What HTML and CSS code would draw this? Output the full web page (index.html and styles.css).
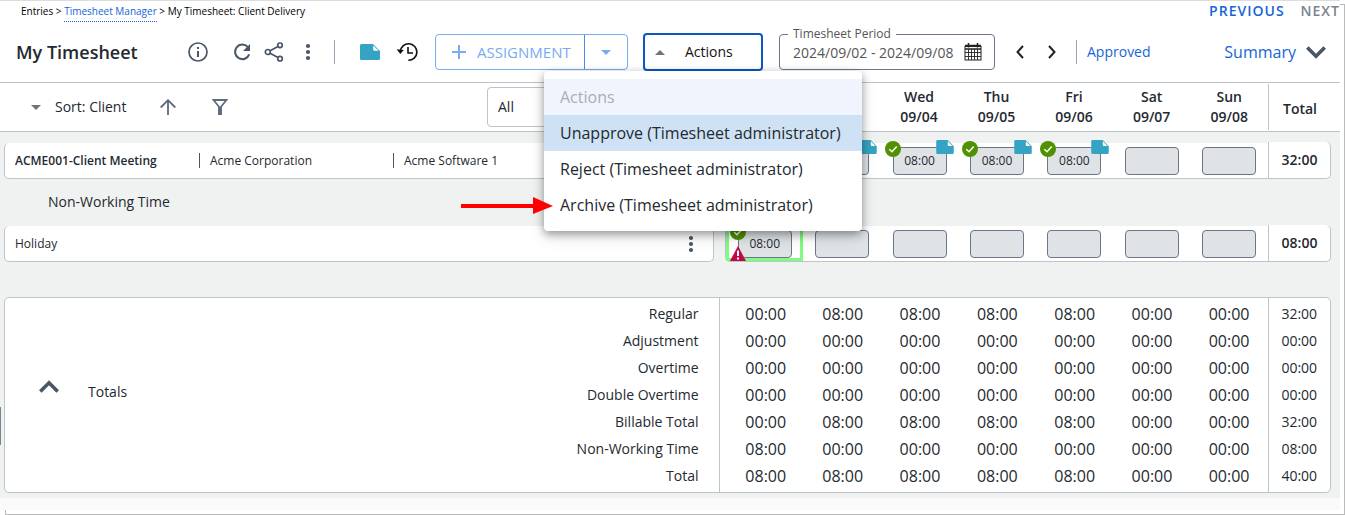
FILE: index.html
```
<!DOCTYPE html>
<html lang="en">
<head>
<meta charset="utf-8">
<title>My Timesheet: Client Delivery</title>
<link rel="stylesheet" href="styles.css">
</head>
<body>
<svg class="defs" aria-hidden="true">
  <symbol id="note" viewBox="0 0 20 16"><path d="M1.500 0H13L20 7V14.500A1.500 1.500 0 0 1 18.500 16H1.500A1.500 1.500 0 0 1 0 14.500V1.500A1.500 1.500 0 0 1 1.500 0Z" fill="#35a3c3"/><path d="M13.200 1.400 18.600 6.800H14.200a1 1 0 0 1-1-1Z" fill="#fff"/></symbol>
  <symbol id="check" viewBox="0 0 16 16"><circle cx="8" cy="8" r="8" fill="#4f9100"/><path d="M4.300 8.200 7 10.700 11.700 5.500" fill="none" stroke="#fff" stroke-width="1.500"/></symbol>
  <symbol id="dots" viewBox="0 0 6 18"><g fill="#4a5568"><circle cx="3" cy="3" r="2.100"/><circle cx="3" cy="9" r="2.100"/><circle cx="3" cy="15" r="2.100"/></g></symbol>
</svg>
<div class="frame">
<div class="app">
  <nav class="crumbs">
    <span class="trail">Entries &gt; <a href="#">Timesheet Manager</a> &gt; My Timesheet: Client Delivery</span>
    <span class="pager"><a href="#">PREVIOUS</a><span class="off">NEXT</span></span>
  </nav>

  <header class="toolbar">
    <h1>My Timesheet</h1>
    <button class="icon" aria-label="Information"><svg width="20" height="20" viewBox="0 0 20 20"><circle cx="10" cy="10" r="9" fill="none" stroke="#4a5568" stroke-width="1.700"/><path d="M9 5h2v2H9zM9 9h2v6H9z" fill="#4a5568"/></svg></button>
    <button class="icon refresh" aria-label="Refresh"><svg width="20" height="20" viewBox="0 0 20 20"><path d="M15.700 4.900A7.300 7.300 0 1 0 17.200 12.400" fill="none" stroke="#4a5568" stroke-width="2"/><path d="M18 2V9H11Z" fill="#4a5568"/></svg></button>
    <button class="icon share" aria-label="Share"><svg width="20" height="20" viewBox="0 0 20 20" fill="none" stroke="#4a5568" stroke-width="1.700"><circle cx="3.800" cy="10" r="2.500"/><circle cx="16" cy="3.300" r="2.300"/><circle cx="16" cy="16.700" r="2.300"/><path d="M6 8.800 14 4.400M6 11.200l8 4.400"/></svg></button>
    <button class="icon more" aria-label="More"><svg width="6" height="18"><use href="#dots"/></svg></button>
    <span class="rule"></span>
    <button class="icon notes" aria-label="Notes"><svg width="20" height="16"><use href="#note"/></svg></button>
    <button class="icon history" aria-label="History"><svg width="22" height="20" viewBox="0 0 22 20" fill="none" stroke="#111" stroke-width="1.600"><path d="M4.300 9.500A8.300 8.300 0 1 1 12.300 18.300"/><path d="M12 5v6h5"/><path d="M.700 7.200 7.800 8 4.300 12Z" fill="#111" stroke="none"/></svg></button>
    <div class="split">
      <button class="add"><svg width="14" height="14" viewBox="0 0 14 14"><path d="M7 0v14M0 7h14" stroke="#7aaaf0" stroke-width="2"/></svg>ASSIGNMENT</button>
      <button class="drop" aria-label="Assignment options"><svg width="10" height="5" viewBox="0 0 10 5"><path d="M0 0H10L5 5Z" fill="#7aaaf0"/></svg></button>
    </div>
    <div class="actions">
      <button class="toggle" aria-expanded="true"><svg width="10" height="5" viewBox="0 0 10 5"><path d="M0 5H10L5 0Z" fill="#737373"/></svg>Actions</button>
      <div class="menu" role="menu">
        <div class="menu-title">Actions</div>
        <button role="menuitem" class="current">Unapprove (Timesheet administrator)</button>
        <button role="menuitem">Reject (Timesheet administrator)</button>
        <button role="menuitem">Archive (Timesheet administrator)</button>
        <svg class="pointer" width="92" height="18" viewBox="0 0 92 18"><path d="M0 7H72V0L92 9 72 17V11H0Z" fill="#f00"/></svg>
      </div>
    </div>
    <fieldset class="period">
      <legend><label for="period">Timesheet Period</label></legend>
      <input id="period" type="text" value="2024/09/02 - 2024/09/08">
      <button class="icon" aria-label="Open calendar"><svg width="18" height="18" viewBox="0 0 18 18"><rect x="1" y="3.500" width="16" height="13.500" fill="#fff" stroke="#222"/><path d="M1 2.500H17M1 6H17" stroke="#222" stroke-width="1.500"/><path d="M4.500 0V4.500M13.500 0V4.500" stroke="#222" stroke-width="1.500"/><path d="M1 9.500H17M1 13.500H17M4.500 6V17M7.500 6V17M10.500 6V17M13.500 6V17" stroke="#222" stroke-width=".9"/></svg></button>
    </fieldset>
    <button class="icon prev" aria-label="Previous period"><svg width="8" height="14" viewBox="0 0 8 14"><path d="M7 1 1.500 7 7 13" fill="none" stroke="#222" stroke-width="2"/></svg></button>
    <button class="icon next" aria-label="Next period"><svg width="8" height="14" viewBox="0 0 8 14"><path d="M1 1 6.500 7 1 13" fill="none" stroke="#222" stroke-width="2"/></svg></button>
    <span class="rule status-rule"></span>
    <a class="status" href="#">Approved</a>
    <button class="summary">Summary<svg width="20" height="13" viewBox="0 0 20 13"><path d="M1.300 1.500 10 10.200 18.700 1.500" fill="none" stroke="#4a5568" stroke-width="3.600"/></svg></button>
  </header>

  <div class="heads">
    <div class="sort">
      <button class="sort-by"><svg width="10" height="5" viewBox="0 0 10 5"><path d="M0 0H10L5 5Z" fill="#737373"/></svg>Sort: Client</button>
      <button class="icon" aria-label="Sort direction"><svg width="16" height="16" viewBox="0 0 16 16"><path d="M8 16V1.500M.700 8.500 8 1.200 15.300 8.500" fill="none" stroke="#5d6b7e" stroke-width="1.800"/></svg></button>
      <button class="icon filter" aria-label="Filter"><svg width="16" height="16" viewBox="0 0 16 16"><path d="M1.500 1H14.500L9 7.800V15H7V7.800Z" fill="none" stroke="#5d6b7e" stroke-width="1.800"/><path d="M6.500 8h3V15.500h-3Z" fill="#5d6b7e"/></svg></button>
      <select class="scope" aria-label="Show"><option>All</option></select>
    </div>
    <div class="days day-names">
      <span></span><span></span><span>Wed<br>09/04</span><span>Thu<br>09/05</span><span>Fri<br>09/06</span><span>Sat<br>09/07</span><span>Sun<br>09/08</span>
    </div>
    <div class="sum-head">Total</div>
  </div>

  <main class="sheet">
    <div class="entry">
      <div class="task"><strong>ACME001-Client Meeting</strong><span class="field">Acme Corporation</span><span class="field">Acme Software 1</span></div>
      <div class="days cells">
        <div class="cell"><input aria-label="Mon 09/02"></div>
        <div class="cell"><input aria-label="Tue 09/03"><svg class="ok"><use href="#check"/></svg><svg class="tag"><use href="#note"/></svg></div>
        <div class="cell"><input aria-label="Wed 09/04" value="08:00"><svg class="ok"><use href="#check"/></svg><svg class="tag"><use href="#note"/></svg></div>
        <div class="cell"><input aria-label="Thu 09/05" value="08:00"><svg class="ok"><use href="#check"/></svg><svg class="tag"><use href="#note"/></svg></div>
        <div class="cell"><input aria-label="Fri 09/06" value="08:00"><svg class="ok"><use href="#check"/></svg><svg class="tag"><use href="#note"/></svg></div>
        <div class="cell"><input aria-label="Sat 09/07"></div>
        <div class="cell"><input aria-label="Sun 09/08"></div>
      </div>
      <div class="sum">32:00</div>
    </div>
    <h2>Non-Working Time</h2>
    <div class="entry">
      <div class="task"><span>Holiday</span><button class="icon row-more" aria-label="More"><svg width="6" height="18"><use href="#dots"/></svg></button></div>
      <div class="days cells">
        <div class="cell marked"><input aria-label="Holiday Mon 09/02" value="08:00"><svg class="ok"><use href="#check"/></svg><svg class="warn" viewBox="0 0 16 15"><path d="M8 0 16 15H0Z" fill="#c00a45"/><path d="M8 4.500V10M8 11.500V13.500" stroke="#fff" stroke-width="2"/></svg></div>
        <div class="cell"><input aria-label="Holiday Tue 09/03"></div>
        <div class="cell"><input aria-label="Holiday Wed 09/04"></div>
        <div class="cell"><input aria-label="Holiday Thu 09/05"></div>
        <div class="cell"><input aria-label="Holiday Fri 09/06"></div>
        <div class="cell"><input aria-label="Holiday Sat 09/07"></div>
        <div class="cell"><input aria-label="Holiday Sun 09/08"></div>
      </div>
      <div class="sum">08:00</div>
    </div>

    <section class="totals">
      <button class="collapse"><svg width="20" height="13" viewBox="0 0 20 13"><path d="M1.300 11.500 10 2.800 18.700 11.500" fill="none" stroke="#4a5568" stroke-width="3.600"/></svg><span>Totals</span></button>
      <table>
        <tr><th>Regular</th><td>00:00</td><td>08:00</td><td>08:00</td><td>08:00</td><td>08:00</td><td>00:00</td><td>00:00</td><td>32:00</td></tr>
        <tr><th>Adjustment</th><td>00:00</td><td>00:00</td><td>00:00</td><td>00:00</td><td>00:00</td><td>00:00</td><td>00:00</td><td>00:00</td></tr>
        <tr><th>Overtime</th><td>00:00</td><td>00:00</td><td>00:00</td><td>00:00</td><td>00:00</td><td>00:00</td><td>00:00</td><td>00:00</td></tr>
        <tr><th>Double Overtime</th><td>00:00</td><td>00:00</td><td>00:00</td><td>00:00</td><td>00:00</td><td>00:00</td><td>00:00</td><td>00:00</td></tr>
        <tr><th>Billable Total</th><td>00:00</td><td>08:00</td><td>08:00</td><td>08:00</td><td>08:00</td><td>00:00</td><td>00:00</td><td>32:00</td></tr>
        <tr><th>Non-Working Time</th><td>08:00</td><td>00:00</td><td>00:00</td><td>00:00</td><td>00:00</td><td>00:00</td><td>00:00</td><td>08:00</td></tr>
        <tr><th>Total</th><td>08:00</td><td>08:00</td><td>08:00</td><td>08:00</td><td>08:00</td><td>00:00</td><td>00:00</td><td>40:00</td></tr>
      </table>
    </section>
  </main>
  <div class="foot"></div>
  <span class="handle"></span>
</div>
</div>
</body>
</html>
```
FILE: styles.css
```
* { box-sizing: border-box; }
body { margin: 0; background: #fff; color: #24292f; font: 14px/20px "Open Sans", "Noto Sans", sans-serif; }
button, input, select { font: inherit; color: inherit; margin: 0; padding: 0; border: 0; background: none; }
button { display: flex; align-items: center; cursor: pointer; }
a { color: #1565d8; text-decoration: none; }
svg { display: block; flex: none; }
.defs { position: absolute; width: 0; height: 0; }

.frame { position: relative; padding: 0 5px 5px 0; }
.frame::before { content: ""; position: absolute; inset: 4px 0 0 5px; border: 1px solid #bbb; }
.app { position: relative; background: #fff; border-top: 1px solid #ddd; }

.crumbs { display: flex; justify-content: space-between; height: 21px; padding-left: 21px; font-size: 10px; color: #000; }
.trail a { border-bottom: 1px dotted #1565d8; padding-bottom: 3px; }
.pager { display: flex; gap: 16px; font-size: 14px; font-weight: 600; letter-spacing: 1px; }
.pager .off { color: #7b8390; }

.toolbar { display: flex; align-items: center; height: 60px; padding: 0 14px 0 16px; }
h1 { flex: 0 0 172px; margin: 0; font-size: 18px; line-height: 24px; font-weight: 600; }
.icon { flex: none; justify-content: center; }
.refresh { margin-left: 24px; }
.share { margin-left: 12px; }
.more { margin-left: 21px; }
.rule { flex: none; width: 1px; height: 24px; margin-left: 23px; background: #9aa5b1; }
.notes { margin-left: 25px; }
.history { margin-left: 16px; }
.split { display: flex; flex: none; height: 36px; margin-left: 17px; border: 1px solid #7aaaf0; border-radius: 4px; color: #7aaaf0; font-size: 15px; }
.add { gap: 11px; width: 148px; padding-left: 16px; }
.drop { justify-content: center; width: 43px; border-left: 1px solid #4a8ce8; }
.actions { position: relative; z-index: 5; flex: none; margin-left: 15px; }
.toggle { gap: 20px; width: 120px; height: 38px; padding-left: 10px; border: 2px solid #0b57c4; border-radius: 4px; background: #fff; color: #111; }
.menu { position: absolute; top: 38px; right: -99px; min-width: 318px; padding: 8px 0; border-radius: 4px; background: #fff; box-shadow: 0 3px 8px rgba(0,0,0,.35), 0 6px 16px rgba(0,0,0,.12); font-size: 16px; white-space: nowrap; }
.menu-title { height: 36px; padding: 0 16px; line-height: 36px; color: #a9adb3; background: #f0f5fd; }
.menu button { width: 100%; height: 36px; padding: 0 16px; }
.menu .current { background: #cfe2f5; }
.pointer { position: absolute; left: -83px; bottom: 16px; }
.period { display: flex; flex: none; align-items: center; position: relative; width: 216px; min-width: 0; height: 36px; margin: 0 0 0 16px; padding: 0 12px 0 13px; border: 1px solid #6b7688; border-radius: 4px; color: #555; }
.period legend { position: absolute; top: -9px; left: 8px; padding: 0 5px; background: #fff; font-size: 12px; line-height: 16px; }
.period input { flex: 1; width: 160px; min-width: 0; height: 34px; }
.prev { margin-left: 21px; }
.next { margin-left: 24px; }
.status-rule { margin-left: 20px; }
.status { margin-left: 10px; }
.summary { gap: 10px; margin-left: auto; color: #1565d8; font-size: 16px; }

.heads { display: flex; height: 50px; padding-right: 9px; border: solid #bcc3ca; border-width: 1px 0; }
.sort { display: flex; flex: 1; align-items: center; padding-left: 31px; }
.sort-by { gap: 14px; width: 129px; }
.filter { margin-left: 36px; }
.scope { flex: 1; height: 40px; margin: 0 11px 0 259px; padding: 0 10px; border: 1px solid #bcc3ca; border-radius: 4px; appearance: none; }
.days { display: grid; flex: 0 0 543px; grid-template-columns: repeat(7, 1fr); }
.day-names { padding-top: 4px; text-align: center; font-weight: 600; }
.sum-head { display: flex; flex: 0 0 63px; align-items: center; justify-content: center; margin: 1px 0; padding-top: 4px; border-left: 1px solid #bcc3ca; font-weight: 600; }

.sheet { padding: 10px 9px 5px 4px; background: #f0f2f2; }
.entry { display: flex; height: 37px; font-size: 12px; }
.task { display: flex; flex: 1; align-items: center; margin: 1px 11px 0 0; padding-left: 10px; border: solid #bcc3ca; border-width: 0 1px 1px; border-radius: 5px; background: #fff; }
.task strong { flex: 0 0 184px; font-weight: 600; }
.field { flex: 0 0 194px; padding-left: 10px; border-left: 1px solid #4a5568; line-height: 15px; }
.row-more { margin: 0 19px 0 auto; }
.cells { margin-top: 1px; border: solid #bcc3ca; border-width: 0 0 1px 1px; border-radius: 5px 0 0 5px; background: #fff; }
.cell { position: relative; display: flex; align-items: center; justify-content: center; }
.cell input { width: 54px; height: 28px; border: 1px solid #6b7688; border-radius: 4px; background: #dfe3e6; text-align: center; }
.marked { box-shadow: inset 0 0 0 3px #80fb80; }
.ok, .tag, .warn { position: absolute; }
.ok { top: -2px; left: 4px; width: 16px; height: 16px; }
.tag { top: -3px; right: 4px; width: 18px; height: 14px; }
.warn { bottom: 0; left: 4px; width: 16px; height: 15px; }
.sum { display: flex; flex: 0 0 63px; align-items: center; justify-content: center; border: solid #bcc3ca; border-width: 0 1px 1px; border-radius: 0 5px 5px 0; background: #fff; font-size: 14px; font-weight: 600; }
h2 { margin: 0; padding: 13px 44px; font-size: 14px; line-height: 20px; font-weight: 400; }

.totals { display: flex; margin-top: 35px; border: 1px solid #bcc3ca; border-radius: 5px; background: #fff; }
.collapse { flex: 1; align-self: stretch; gap: 29px; padding: 0 34px 6px; }
.collapse svg { margin-bottom: 12px; }
.totals table { border-collapse: collapse; table-layout: fixed; width: 760px; border-spacing: 0; }
.totals th, .totals td { height: 27px; padding: 0; text-align: center; font-size: 16px; }
.totals th { width: 149px; padding-right: 20px; text-align: right; font-size: 14px; font-weight: 400; border-right: 1px solid #bcc3ca; }
.totals td:nth-child(2) { padding-left: 8px; width: 85px; }
.totals td:last-child { width: 62px; border-left: 1px solid #bcc3ca; font-size: 14px; }
.totals tr:first-child > * { height: 29px; padding-top: 2px; }
.totals tr:last-child > * { height: 30px; padding-bottom: 3px; }
.foot { height: 12px; background: #fafafa; }
.handle { position: absolute; left: 0; bottom: 65px; width: 1px; height: 38px; background: #7b828c; }
```
